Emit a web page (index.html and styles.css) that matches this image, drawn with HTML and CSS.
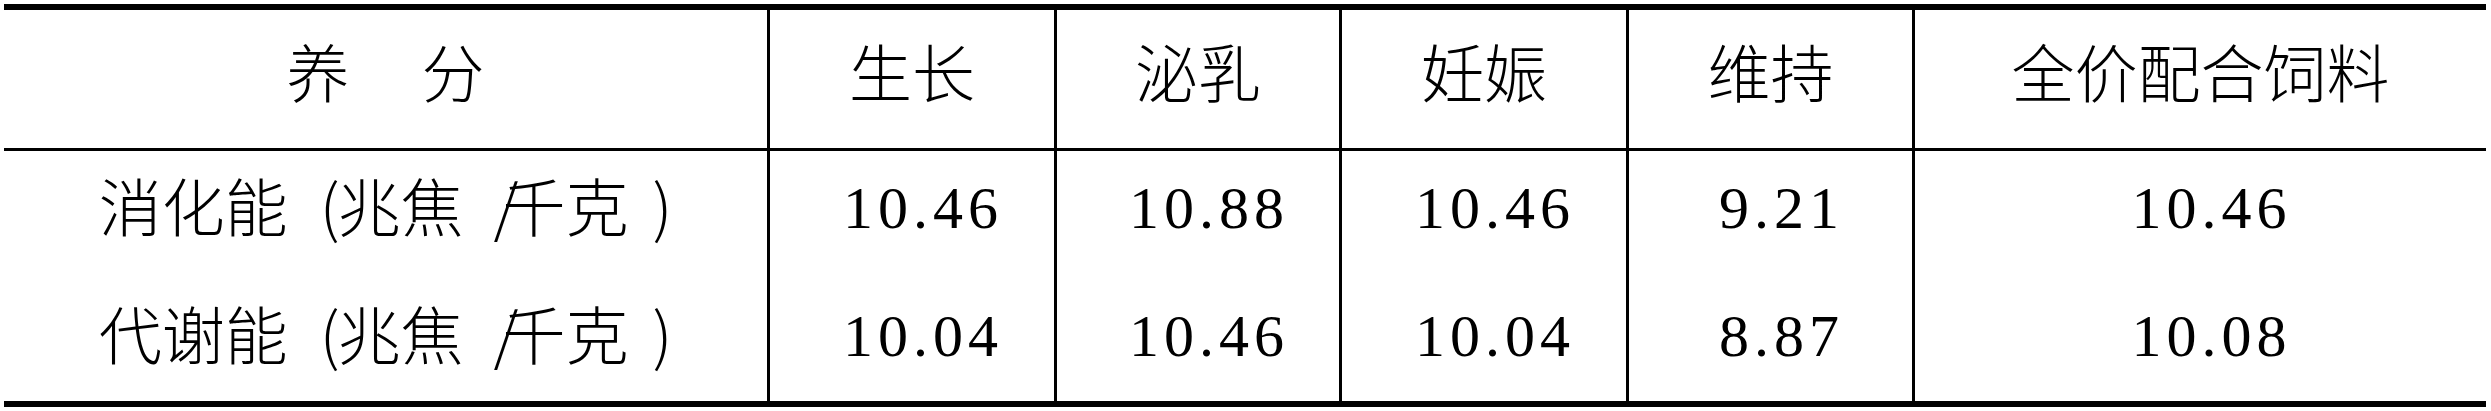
FILE: index.html
```html
<!DOCTYPE html>
<html lang="zh-CN">
<head>
<meta charset="utf-8">
<title>养分表</title>
<link rel="stylesheet" href="styles.css">
</head>
<body>
<div class="tbl">
  <div class="c h first"><span>养</span><span class="sp">分</span></div>
  <div class="c h">生长</div>
  <div class="c h">泌乳</div>
  <div class="c h">妊娠</div>
  <div class="c h">维持</div>
  <div class="c h">全价配合饲料</div>

  <div class="c r1 first label"><span>消化能</span><span class="lp">(</span><span>兆焦</span><span class="sl">/</span><span>千克</span><span class="rp">)</span></div>
  <div class="c r1 num">10.46</div>
  <div class="c r1 num">10.88</div>
  <div class="c r1 num">10.46</div>
  <div class="c r1 num">9.21</div>
  <div class="c r1 num">10.46</div>

  <div class="c r2 first label"><span>代谢能</span><span class="lp">(</span><span>兆焦</span><span class="sl">/</span><span>千克</span><span class="rp">)</span></div>
  <div class="c r2 num">10.04</div>
  <div class="c r2 num">10.46</div>
  <div class="c r2 num">10.04</div>
  <div class="c r2 num">8.87</div>
  <div class="c r2 num">10.08</div>
</div>
</body>
</html>
```
FILE: styles.css
```css
html, body {
  margin: 0;
  padding: 0;
  background: #fff;
}

.tbl {
  margin: 4px 0 0 4px;
  width: 2482px;
  display: grid;
  grid-template-columns: 763px 287px 285px 287px 286px 574px;
  grid-template-rows: 141px 114px 136px;
  border-top: 6px solid #000;
  border-bottom: 6px solid #000;
  color: #000;
  font-family: "Noto Sans CJK SC", "Liberation Serif", serif;
  font-size: 63px;
  font-weight: 300;
  line-height: 63px;
}

.c {
  box-sizing: border-box;
  display: flex;
  align-items: center;
  justify-content: center;
  border-left: 3px solid #000;
  white-space: pre;
}

.c.first {
  border-left: none;
}

.h {
  border-bottom: 3px solid #000;
  padding-bottom: 19px;
}

.sp {
  margin-left: 72px;
}

.r2 {
  padding-top: 6px;
}

.label {
  padding-bottom: 10px;
}

.r2.label {
  padding-top: 6px;
}

.lp {
  margin-left: 32px;
  margin-right: -2px;
}

.sl {
  margin-left: 30px;
  margin-right: -16px;
}

.rp {
  margin-left: 24px;
}

.num {
  font-family: "Liberation Serif", serif;
  font-size: 60px;
  font-weight: 400;
  line-height: 60px;
  letter-spacing: 5px;
  padding-left: 22px;
}
```
